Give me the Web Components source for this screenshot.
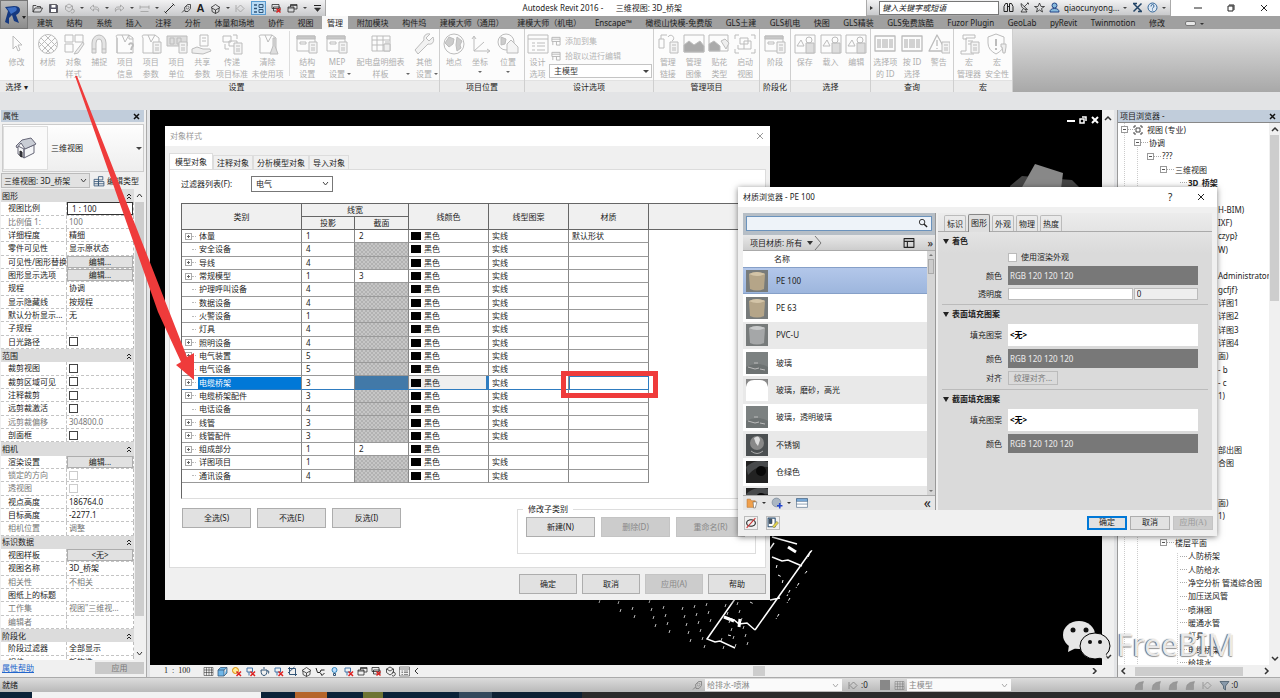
<!DOCTYPE html>
<html lang="zh-CN">
<head>
<meta charset="utf-8">
<title>Autodesk Revit 2016 - 三维视图: 3D_桥架</title>
<style>
html,body{margin:0;height:100%}
body{font:8px/12px "Noto Sans","Noto Sans CJK SC",sans-serif;color:#222;background:#e3e4e6;overflow:hidden}
</style>
</head>
<body>
<rv-app></rv-app>
<script>
const BASE = `*{box-sizing:border-box}
button,input,select{font:inherit;color:inherit;margin:0;padding:0;border:0;background:none;border-radius:0;min-width:0}
select{appearance:none}a{color:inherit;text-decoration:none}
input[type=checkbox]{appearance:none;width:9px;height:9px;border:1px solid #444;background:#fff;display:block}
input[type=checkbox]:disabled{border-color:#ccc}
span,a,button,label,td,th{white-space:nowrap}`;
const define = (name, css, html) => customElements.define(name, class extends HTMLElement {
  constructor(){
    super();
    const t = document.createElement('template');
    t.innerHTML = `<style>${BASE}${css}</style>${typeof html === 'function' ? html(this) : html}`;
    this.attachShadow({mode:'open'}).append(t.content.cloneNode(true));
  }
});

/* Icon shapes, all on a 22 by 22 grid. */
const card = (x,y) => `<path fill="#f4f4f4" d="M${x} ${y}h8v11h-8z"/><path d="M${x+2} ${y+3}h4M${x+2} ${y+6}h4M${x+2} ${y+8}h4"/>`;
const ICONS = {
  cursor:'<path d="M7 3v13l3-3 2 5 2-1-2-5h4z"/>',
  material:'<circle cx="11" cy="11" r="9.500"/><path d="M4 5l13 13M8 2l12 12M2 9l11 11M18 5L5 18M14 2L2 14M20 9L9 20"/>',
  objstyle:'<path d="M2 2h8v7H2zM12 2h8v7h-8zM2 11h8v8H2z"/><path d="M20 9l-7 9-2 3 4-1 6-9z" fill="#eee"/>',
  magnet:'<path fill="#e4e4e4" d="M4 20V10a7 8 0 0 1 14 0v10h-4V10a3 4 0 0 0-6 0v10zM4 16h4M14 16h4"/>',
  projinfo:'<path d="M3 5q-2-3 1-3h11l4 3v15H3zM3 5v15M8 2l3 7 4-7M15 2v4h4"/><path d="M15 12a2 2 0 1 1 3 2l-1 3M17 19v1" stroke-width="2"/>',
  projparam:'<path d="M3 5q-2-3 1-3h11l4 3v15H3zM8 2l3 7 4-7"/>'+card(13,9),
  units:'<path fill="#ddd" d="M1 3h20v10H1z"/><path d="M4 5h4v6H4zM11 5h4v6h-4z"/>'+card(13,9),
  shared:'<path d="M9 2h8v11H9zM11 5h4M11 8h4"/><path d="M1 16l5-2 6 2h7l1 2-8 3-11-1z" fill="#eee"/>',
  transfer:'<path d="M2 3h8v6H2zM8 8h8v5H8zM12 2h4v4M4 11v5h4"/>'+card(13,10),
  purge:'<path d="M3 5q-2-3 1-3h11l4 3v15H3zM8 2l3 7 4-7"/><path d="M16 5h2v8l3 8h-8l3-8z" fill="#ddd"/>',
  panel:'<path d="M1 3h18v15H1zM4 9h6v2H4z"/><path d="M1 3h18v3H1z" fill="#c8c8c8"/>'+card(13,9),
  schedule:'<path d="M2 3h18v15H2zM2 7h18M2 12h18M7 3v15M13 3v15"/><path fill="#eee" d="M14 11h6v7h-6zM16 8v3M18 8v3"/>',
  wrench:'<path fill="#f2f2f2" d="M20 4l-4 4-3-3 4-4c-4-1-7 2-6 6l-9 10 3 4 10-10c4 1 7-2 5-7z"/>',
  globe:'<circle cx="11" cy="11" r="10"/><path fill="#ccc" d="M6 4l5 2-1 5-4 3-4-4zM14 4l5 4-2 4 1 3-4 3-1-6z"/>',
  coord:'<path d="M5 4v14h15M5 18L15 9M3 6l2-3 2 3M18 16l3 2-3 2"/>',
  position:'<circle cx="9" cy="9" r="8"/><path fill="#ccc" d="M4 4l5 2-1 5-4 1z"/><path fill="#f4f4f4" d="M10 11l4-4 7 7v6H10z"/>',
  design:'<path d="M1 2h20v18H1zM1 6h20M5 10h3M10 10h8M5 13h3M10 13h8M5 17h3M10 17h8"/>',
  small:'<path stroke-width="2" d="M2 3h18v9H2zM2 7h18M4 12v8M12 12v8h8v-8"/>',
  link:'<path d="M2 6h5v9H2zM4 6V2h6M11 4a3 3 0 1 1 4 4"/>'+card(13,9),
  image:'<path d="M1 2h20v17H1z"/><path fill="#aaa" d="M1 19v-7l5-4 5 4 6-4 4 5v6z"/>',
  decal:'<path d="M1 2h19v16H1z"/><path fill="#aaa" d="M1 18v-7l5-3 6 5v5z"/><path fill="#eee" d="M13 8l4-2 4 4-3 6z"/>',
  start:'<path d="M1 6V2h4M17 2h4v4M21 16v4h-4M5 20H1v-4M6 5h8v6H6zM10 8h7v8h-7zM4 12v4h6"/>',
  save:'<path d="M1 2h20v18H1zM3 13l4-6 3 6z"/><path fill="#ddd" d="M12 10h8v10h-8z"/><circle cx="15" cy="7" r="3"/>',
  barcode:'<path d="M1 3h20v15H1zM4 6v9M6 6v9M9 6v9M11 6v9M13 6v9M16 6v9M18 6v9" stroke-width="1.300"/>',
  warn:'<path stroke-width="1.300" d="M1 18L9 2l9 16zM9 7v6M9 15v1"/>'+card(14,9),
  macro:'<path d="M5 2h12v3H8v13H3v3h13M5 2v4h4M10 8h5M10 11h4"/>'+card(13,9),
  shield:'<path d="M10 1l8 3v6q0 7-8 11-8-4-8-11V4z"/><path d="M10 6v7M10 15v2" stroke-width="2"/><path fill="#eee" d="M15 11h5v3l-1 6h-2l-1-6h-1z"/>',
  open:'<path stroke-width="1.500" d="M2 18V5h6l2 2h7v3M2 18l4-8h15l-4 8z"/>',
  disk:'<path fill="#556" d="M3 3h14l2 2v14H3z"/><path fill="#fff" stroke="none" d="M7 4h8v5H7zM6 12h10v6H6z"/>',
  sync:'<path stroke-width="1.500" d="M3 6l7-4 7 4v7l-7 5-7-5zM3 6l7 4 7-4M14 13a4 4 0 1 1 0 6"/>',
  undo:'<path stroke-width="1.500" d="M9 4l-7 6 7 6v-4h5q4 0 5 5 2-9-5-9H9z"/>',
  redo:'<path stroke-width="1.500" d="M13 4l7 6-7 6v-4H8q-4 0-5 5-2-9 5-9h5z"/>',
  dim:'<path d="M2 5v7M20 5v7M2 8h18M3 17h16" stroke-width="1.500"/>',
  line:'<path d="M3 19L19 3M1 17l4 4M17 1l4 4" stroke-width="2"/>',
  tag:'<path stroke-width="1.500" d="M2 19l5-5M7 9l6-6h6v8l-5 6h-6z"/><circle cx="13" cy="9" r="3"/>',
  home:'<path d="M2 9l9-6 9 6-9 5zM4 10v7l7 4 7-4v-7M11 14v7" stroke-width="1.500"/>',
  section:'<path stroke-width="1.500" d="M4 11l7-7 7 7-7 7zM2 4v14"/>',
  thin:'<path stroke="#357" stroke-width="3" d="M2 4h6M2 11h6M2 18h6"/><path stroke="#357" stroke-width="2" d="M12 3h8v6h-8zM12 13h8v6h-8z"/>',
  close:'<path stroke-width="1.500" d="M2 3h14v8H2zM5 8h13v8H5z"/><path stroke="#d22" stroke-width="3" d="M11 11l8 8M19 11l-8 8"/>',
  windows:'<path d="M2 8h12v10H2zM7 8V3h13v9h-6M2 10h12M7 5h13" stroke-width="1.500"/>',
  menu:'<path d="M4 5h14" stroke-width="2"/><path fill="#333" d="M5 10h12l-6 7z"/>',
  bino:'<path stroke-width="2" d="M2 19V9l3-6h4v16zM13 19V3h4l3 6v10zM9 9h4"/>',
  dish:'<path stroke-width="1.500" d="M4 3q0 12 13 12L4 3M10 10l8-8M8 14l-4 6h12l-4-6M16 2h3v3"/>',
  star:'<path stroke-width="1.500" d="M11 2l3 7h7l-6 4 2 7-6-4-6 4 2-7-6-4h7z"/>',
  user:'<circle cx="11" cy="7" r="5" fill="#8bd" stroke="#248" stroke-width="2"/><path fill="#8bd" stroke="#248" stroke-width="2" d="M2 20q0-7 9-7t9 7z"/>',
  exch:'<path stroke="#246" stroke-width="3" d="M3 3l16 16M19 3L3 19M2 3h8M12 19h8"/>',
  help:'<circle cx="11" cy="11" r="9" stroke="#369" fill="#dde8f4" stroke-width="2"/><path stroke="#369" stroke-width="2" d="M8 9q0-4 3-4t3 3-3 4v1M11 15v2"/>',
  cube:'<path fill="#6fb6e8" stroke="#357" stroke-width="1.500" d="M2 8h12v12H2zM2 8l5-5h13l-6 5M20 3v11l-6 6"/>',
  grid:'<path d="M2 3h18v16H2zM2 8h18M2 13h18M7 3v16M12 3v16M17 3v16"/>',
  sun:'<circle cx="9" cy="9" r="6" stroke="#d80" stroke-width="2" fill="#fe9"/><path stroke="#d22" stroke-width="3" d="M11 11l9 9M20 11l-9 9"/>',
  bulbx:'<path stroke="#47a" stroke-width="2" d="M4 4h11v8H4zM8 12v7"/><path stroke="#d22" stroke-width="3" d="M11 11l9 9M20 11l-9 9"/>',
  tea:'<path stroke="#357" stroke-width="2" d="M4 8h12q0 11-6 11T4 8zM16 10q5-2 3 5M8 4h4"/>',
  crop:'<path stroke="#357" stroke-width="2" d="M5 2v15h15M2 5h15v15M2 14L15 2"/>',
  bulb:'<circle cx="11" cy="8" r="5" stroke="#38b" fill="#bdf" stroke-width="2"/><path stroke="#357" stroke-width="2" d="M9 15h4v4H9z"/>',
  glasses:'<path stroke-width="2" d="M2 4l3 9h5l2-5h7M11 14l3 5 5-5"/>',
  filter:'<path fill="#89a" stroke="#456" stroke-width="1.500" d="M2 3h18l-7 9v8l-4-3v-5z"/>',
  flag:'<path fill="#999" d="M2 19l2-9 6-5 9-2-2 6v10z"/>',
  folder:'<path fill="#f0a04c" stroke="#b76a20" d="M2 19V4h6l2 3h7v12z"/><path fill="#fff" stroke="#555" d="M13 9h7l-3 11h-3z"/>',
  ball:'<circle cx="10" cy="10" r="8" fill="#aab6c2" stroke="#678"/><path stroke="#24c" stroke-width="3" d="M16 11v10M11 16h10"/>',
  list:'<path fill="#fff" stroke="#357" d="M1 3h20v16H1z"/><path fill="#7fb0de" stroke="#357" d="M1 3h20v5H1zM1 13h20"/>',
  pane:'<path stroke-width="2" d="M2 3h18v16H2zM2 8h18M8 8v11"/>',
  search:'<circle cx="9" cy="9" r="6" stroke-width="2"/><path stroke-width="3" d="M13 13l7 7"/>',
  noedit:'<ellipse cx="11" cy="11" rx="8" ry="6" stroke-width="2"/><path stroke="#c33" stroke-width="2" d="M3 20L19 2"/>',
  edit:'<path fill="#fff" stroke="#357" stroke-width="2" d="M2 2h13v16H2z"/><path fill="#357" d="M4 4h5v8H4z"/><path fill="#e5d44a" stroke="#775" d="M10 17l8-9 3 3-8 9z"/>',
  house:'<path fill="#f4f5f7" stroke="#667" d="M3 9l6 3v9l-6-4zM9 12l10-4v8L9 21z"/><path fill="#c9cdd5" stroke="#667" d="M1 9l6-6 9-2 5 6-11 5-4-6-4 5z"/><path fill="#445" d="M5 14l2 1v5l-2-1z"/>',
  type:'<path stroke="#357" stroke-width="1.500" d="M2 8h8v12H2zM2 12h8M10 3h8v6h-8zM10 12h10v8H10zM2 16h18"/>'
};
customElements.define('rv-icon', class extends HTMLElement {
  constructor(){
    super();
    this.attachShadow({mode:'open'}).innerHTML = `<style>:host{display:inline-flex;width:var(--icon,22px);height:var(--icon,22px);flex:none}svg{width:100%;height:100%}</style>
    <svg viewBox="0 0 22 22" fill="none" stroke="var(--ink,currentColor)" stroke-linejoin="round" aria-hidden="true">${ICONS[this.getAttribute('name')]||''}</svg>`;
  }
});
const ic = n => `<rv-icon name="${n}"></rv-icon>`;

/* Title bar */
define('rv-title', `:host{display:flex;height:16px;background:#fff}
.bar{display:flex;align-items:center;background:linear-gradient(#f2f2f3,#c9cacc);--icon:11px}
.qat{width:298px;justify-content:space-between;padding:0 2px 0 4px;border-right:1px solid #aaa}
.qat button,.info button{display:flex;align-items:center;height:14px}
.qat .on{background:#b9dbf5;border:1px solid #5a9bd0;padding:0 1px}
.dim{color:#999}.a{font:bold 11px/12px "Liberation Sans",sans-serif}
i{border:2px solid transparent;border-top-color:#444;border-bottom:0}
h1{flex:1;margin:0;font:inherit;line-height:16px;text-align:right;white-space:pre;padding-right:184px}
.info{width:305px;border:1px solid #aaa;border-width:0 1px 1px;justify-content:space-between;padding-right:4px}
.info input{width:120px;height:14px;border:1px solid #777;background:#fff;font-style:italic;padding:0 2px}
.win{display:flex;width:109px;justify-content:space-around;align-items:center;padding-left:10px}
.win svg{width:8px;height:8px;display:block}
`, `<div class="bar qat"><button aria-label="打开">${ic('open')}</button><button aria-label="保存">${ic('disk')}</button><button class="dim" aria-label="同步">${ic('sync')}</button><i></i><button class="dim" aria-label="放弃">${ic('undo')}</button><i></i><button class="dim" aria-label="重做">${ic('redo')}</button><i></i><button class="dim" aria-label="测量">${ic('dim')}</button><i></i><button aria-label="对齐标注">${ic('line')}</button><button aria-label="标记">${ic('tag')}</button><button class="a">A</button><button aria-label="默认三维视图">${ic('home')}</button><i></i><button class="dim" aria-label="剖面">${ic('section')}</button><button class="on" aria-label="细线">${ic('thin')}</button><button aria-label="关闭隐藏窗口">${ic('close')}</button><button aria-label="切换窗口">${ic('windows')}</button><i></i><button aria-label="自定义">${ic('menu')}</button></div>
<h1>Autodesk Revit 2016 -      三维视图: 3D_桥架</h1>
<div class="bar info"><button aria-label="展开"><svg width="8" height="8"><path d="M3 2l3 2-3 2z" fill="#333"/></svg></button><input aria-label="搜索" value="键入关键字或短语"><button aria-label="查找">${ic('bino')}</button><button aria-label="通讯中心">${ic('dish')}</button><button aria-label="收藏夹">${ic('star')}</button><button aria-label="登录">${ic('user')}</button><span>qiaocunyong...</span><i></i><button aria-label="Exchange">${ic('exch')}</button><button aria-label="帮助">${ic('help')}</button><i></i></div>
<div class="win"><button aria-label="最小化"><svg viewBox="0 0 8 8"><path d="M0 4h8" stroke="#222"/></svg></button><button aria-label="还原"><svg viewBox="0 0 8 8" fill="none" stroke="#222"><path d="M1 2h5v5h-5zM2 1h5v5"/></svg></button><button aria-label="关闭"><svg viewBox="0 0 8 8"><path d="M1 1l6 6M7 1l-6 6" stroke="#222"/></svg></button></div>`);

const TABS = '建筑,结构,系统,插入,注释,分析,体量和场地,协作,视图,管理,附加模块,构件坞,建模大师（通用）,建模大师（机电）,Enscape™,橄榄山快模-免费版,GLS土建,GLS机电,快图,GLS精装,GLS免费族酷,Fuzor Plugin,GeoLab,pyRevit,Twinmotion,修改'.split(',');
define('rv-tabs', `:host{display:flex;height:13px;background:#a0a0a0}
nav{flex:1;display:flex;justify-content:space-between;padding-left:4px;color:#1c1c1c}
a{padding:0 5px;line-height:14px}a.on{background:#f8f8f8}
button{width:11px;height:5px;margin:5px 4px 0 15px;background:#e8e8e8;border:1px solid #777;border-radius:2px}
i{border:2px solid transparent;border-top-color:#333;border-bottom:0;height:0;margin:7px 76px 0 0}`,
`<nav>${TABS.map(t=>`<a href="#" ${t==='管理'?'class="on" aria-current="page"':''}>${t}</a>`).join('')}</nav><button aria-label="最小化面板"></button><i></i>`);

/* Ribbon */
define('rv-tool', `:host{display:block;flex:var(--w,26) 1 0;min-width:0}
button{width:100%;display:flex;flex-direction:column;align-items:center;padding-top:4px;gap:1px;line-height:11px;color:#aeaeae}
button span{display:block}i{border:2px solid transparent;border-top-color:#666;border-bottom:0;margin-top:3px}
.s{position:relative}.s i{position:absolute;right:0;bottom:4px}`,
  el => { const l=el.getAttribute('label').split('|'); if(el.hasAttribute('w')) el.style.setProperty('--w',el.getAttribute('w'));
    return `<button class="${el.hasAttribute('side')?'s':''}"><rv-icon name="${el.getAttribute('icon')}" style="--ink:#bcbcbc"></rv-icon>${l.map(t=>`<span>${t}</span>`).join('')}${el.hasAttribute('side')||el.hasAttribute('drop')?'<i></i>':''}</button>`; });
define('rv-group', `:host{display:flex;flex-direction:column;border-right:1px solid #cfcfcf;background:#fcfcfc}
.body{flex:1;display:flex;min-height:0;padding:0 1px}
.name{height:12px;line-height:12px;background:#ececec;text-align:center;border-top:1px solid #e2e2e2}`,
  el => `<div class="body"><slot></slot></div><div class="name">${el.getAttribute('name')}</div>`);
const tool = (icon,label,w=26,x='') => `<rv-tool icon="${icon}" label="${label}" w="${w}" ${x}></rv-tool>`;
define('rv-ribbon', `:host{display:flex;height:63px;background:linear-gradient(#dedede,#a8a8a8)}
.opt{width:103px;display:flex;flex-direction:column;padding:4px 0 2px;color:#b4b4b4;--icon:10px}
.opt button{display:flex;gap:4px;align-items:center;height:15px;padding-left:2px}
.opt label{position:relative;display:block;height:14px;margin-top:1px;color:#333}
.opt select{width:100%;height:14px;border:1px solid #c4c4c4;background:#fff;padding:0 4px}
.opt label::after{content:"";position:absolute;right:3px;top:6px;border:3px solid transparent;border-top-color:#444;border-bottom:0}
.rule{width:1px;background:#ddd;margin:2px 1px 4px 3px}`,
`<rv-group name="选择 ▾" style="width:34px">${tool('cursor','修改')}</rv-group>
<rv-group name="设置" style="width:406px">${tool('material','材质')}${tool('objstyle','对象|样式')}${tool('magnet','捕捉')}${tool('projinfo','项目|信息')}${tool('projparam','项目|参数')}${tool('units','项目|单位')}${tool('shared','共享|参数')}${tool('transfer','传递|项目标准',34)}${tool('purge','清除|未使用项',38)}<div class="rule"></div>${tool('panel','结构|设置',32)}${tool('panel','MEP|设置',28,'side')}${tool('schedule','配电盘明细表|样板',60,'side')}${tool('wrench','其他|设置',28,'side')}</rv-group>
<rv-group name="项目位置" style="width:85px">${tool('globe','地点')}${tool('coord','坐标',26,'drop')}${tool('position','位置',30,'drop')}</rv-group>
<rv-group name="设计选项" style="width:129px">${tool('design','设计|选项')}<div class="opt"><button>${ic('small')}<span>添加到集</span></button><button>${ic('small')}<span>拾取以进行编辑</span></button><label><select aria-label="设计选项"><option>主模型</option></select></label></div></rv-group>
<rv-group name="管理项目" style="width:106px">${tool('link','管理|链接')}${tool('image','管理|图像')}${tool('decal','贴花|类型')}${tool('start','启动|视图')}</rv-group>
<rv-group name="阶段化" style="width:31px">${tool('panel','阶段')}</rv-group>
<rv-group name="选择" style="width:80px">${tool('save','保存')}${tool('save','载入')}${tool('save','编辑')}</rv-group>
<rv-group name="查询" style="width:83px">${tool('barcode','选择项|的 ID')}${tool('barcode','按 ID|选择')}${tool('warn','警告')}</rv-group>
<rv-group name="宏" style="width:59px">${tool('macro','宏|管理器')}${tool('shield','宏|安全性')}</rv-group>`);

/* Properties palette: [label, kind, value, disabled] */
const PROPS = [['图形','h'],['视图比例','box','1 : 100'],['比例值 1:','t','100',1],['详细程度','t','精细'],['零件可见性','t','显示原状态'],['可见性/图形替换','b','编辑...'],['图形显示选项','b','编辑...'],['规程','t','协调'],['显示隐藏线','t','按规程'],['默认分析显示...','t','无'],['子规程','t',''],['日光路径','c'],['范围','h'],['裁剪视图','c'],['裁剪区域可见','c'],['注释裁剪','c'],['远剪裁激活','c'],['远剪裁偏移','t','304800.0',1],['剖面框','c'],['相机','h'],['渲染设置','b','编辑...'],['锁定的方向','c','',1],['透视图','c','',1],['视点高度','t','186764.0'],['目标高度','t','-2277.1'],['相机位置','t','调整',1],['标识数据','h'],['视图样板','b','&lt;无&gt;'],['视图名称','t','3D_桥架'],['相关性','t','不相关',1],['图纸上的标题','t',''],['工作集','t','视图"三维视...',1],['编辑者','t','',1],['阶段化','h'],['阶段过滤器','t','全部显示'],['相位','t','新构造']];
const propRow = ([l,k,v='',d],i) => k==='h' ? `<div class="h"><span>${l}</span><svg viewBox="0 0 6 8"><path d="M1 4l2-2 2 2M1 7l2-2 2 2" fill="none" stroke="#222"/></svg></div>`
  : `<div class="r ${d?'d':''}"><label for="p${i}">${l}</label><div class="v">${k==='b'?`<button id="p${i}">${v}</button>`:k==='c'?`<input type="checkbox" id="p${i}" ${d?'disabled':''}>`:`<input class="${k}" id="p${i}" value='${v}'>`}</div></div>`;
define('rv-properties', `:host{display:flex;flex-direction:column;background:#f0f0f0;border-right:1px solid #aaa;padding:0 2px 1px 1px}
header{display:flex;justify-content:space-between;align-items:center;height:12px;background:#c1cddb;padding:0 4px 0 2px;flex:none}
header svg{width:7px;height:7px}
.type{display:flex;align-items:center;height:48px;margin:2px 0 0 1px;border:1px solid #ccc;background:linear-gradient(#fefefe,#eee);flex:none;gap:3px}
.type div{width:45px;height:44px;border:1px solid #ddd;display:grid;place-items:center;background:#fafafa}
.type span{flex:1}.type i{border:3px solid transparent;border-top-color:#444;border-bottom:0;margin-right:1px}
.pick{display:flex;height:17px;flex:none;--icon:12px;padding:1px 0}
.pick label{position:relative;width:89px}.pick select{width:100%;height:15px;background:#e2e2e2;border:1px solid #bbb;padding-left:2px}
.pick svg{position:absolute;right:3px;top:5px;width:7px;height:5px}
.pick button{display:flex;align-items:center;gap:2px;padding-left:3px}
.mid{flex:1;display:flex;min-height:0;overflow:hidden}
.list{flex:1;height:480px;display:grid;grid-template-rows:repeat(36,1fr);background:#fff}
.h{display:flex;align-items:center;justify-content:space-between;background:#dcdcdc;padding:0 2px 0 1px}.h svg{width:6px;height:8px}
.r{display:flex;border-bottom:1px dashed #c4c4c4;border-right:1px dashed #bbb;min-height:0;line-height:12px}.r label{width:66px;padding-left:7px;overflow:hidden;border-right:1px dashed #c4c4c4}
.v{flex:1;display:flex;align-items:center;min-width:0}.v input:not([type=checkbox]){width:100%;padding-left:2px;height:11px}.v .box{border:1px solid #333;height:13px!important;padding-left:4px!important}
.v button{width:100%;height:12px;line-height:10px;background:#e1e1e1;border:1px solid #adadad}.v [type=checkbox]{margin-left:2px}
.d,.d input{color:#777}
.sb{width:9px;background:#f0f0f0;display:flex;flex-direction:column;margin-left:1px;align-items:center;padding:4px 0}
.sb svg{width:7px;height:5px;flex:none}.sb div{width:9px;background:#cdcdcd;flex:1;margin:4px 0 35px}
footer{display:flex;justify-content:space-between;height:16px;padding:2px 0 2px 1px;flex:none}footer a{color:#2266cc;text-decoration:underline}
footer button{width:49px;height:12px;line-height:12px;background:#c9c9c9;color:#777}`,
`<header><span>属性</span><svg viewBox="0 0 7 7"><path d="M1 1l5 5M6 1L1 6" stroke="#111" stroke-width="1.500"/></svg></header>
<div class="type"><div>${ic('house')}</div><span>三维视图</span><i></i></div>
<div class="pick"><label><select aria-label="实例"><option>三维视图: 3D_桥架</option></select><svg viewBox="0 0 7 5"><path d="M1 1l2.500 3L6 1" fill="none" stroke="#444"/></svg></label><button>${ic('type')}编辑类型</button></div>
<div class="mid"><div class="list">${PROPS.map(propRow).join('')}</div><div class="sb"><svg viewBox="0 0 7 5"><path d="M1 4l2.500-3L6 4" fill="none" stroke="#333"/></svg><div></div><svg viewBox="0 0 7 5"><path d="M1 1l2.500 3L6 1" fill="none" stroke="#333"/></svg></div></div>
<footer><a href="#">属性帮助</a><button disabled>应用</button></footer>`);

/* Drawing area with its view control bar */
const specks = Array.from({length:60},(_,i)=>{const x=450+(i*37)%150,y=490+(i*23)%50;return (y-490)<(x-440)*.4?`M${x} ${y}l-1 3`:''}).join('');
define('rv-canvas', `:host{display:grid;grid-template:minmax(0,1fr) 12px/minmax(0,1fr) 12px;min-width:0;background:#f0f0f0}
.view{background:#000;position:relative;overflow:hidden}.view>svg{position:absolute;left:0;top:0}
.win{position:absolute;right:3px;top:6px;display:flex;gap:4px}.win svg{width:8px;height:8px}
.vs{display:flex;flex-direction:column;justify-content:space-between;align-items:center;padding:5px 0}
.vs svg,.bar>svg{width:8px;height:6px}
.bar{grid-column:1/-1;display:flex;align-items:center;padding:0 16px 0 14px;--icon:11px;gap:3px}
.bar span{font:8px/12px "Liberation Serif","Noto Serif",serif;width:36px;white-space:pre}
.bar div{flex:1}.bar i{width:12px;height:10px;background:#cdcdcd;display:block;margin-left:329px}`,
`<div class="view"><svg width="950" height="555" fill="none" stroke="#fff">
<g stroke="none"><path fill="#444" d="M860 76l12-10 50 4 10 10v10h-70z"/><path fill="#888" d="M885 54l28 9-2 16h-40z"/><path fill="#777" d="M868 78h46v6h-50z"/></g>
<path d="M661 441L605 520M624 433L557 529l8 3 5-1 15 7M574 507l10 3 5 4 8-1 8 7M622 447l10 4 6-1 14 6M622 427l25 7M620 490l10-2" stroke-width="1.500"/>
<path d="M574 507l10 4M590 509l-1 8M638 437l8 5" stroke-width="3"/><path d="M662 440l-5 9m0 12l-3 4m-5 8l-3 5m-6 10l-3 5m-8 11l-3 5M627 455l-1 4M633 470l-1 4M640 480l-3 6M628 465l4 2M600 492l4 2M578 525l4 1" stroke-dasharray="3 2"/>
<path d="${specks}" stroke="#bbb"/></svg>
<div class="win"><svg viewBox="0 0 8 8"><path d="M0 5h8" stroke="#fff" stroke-width="2"/></svg><svg viewBox="0 0 8 8"><path d="M1 3h4v4H1zM3 1h4v4" fill="none" stroke="#fff" stroke-width="1.500"/></svg><svg viewBox="0 0 8 8"><path d="M1 1l6 6M7 1L1 7" stroke="#fff" stroke-width="2"/></svg></div></div>
<div class="vs"><svg viewBox="0 0 8 6"><path d="M1 5l3-3 3 3" fill="none" stroke="#333" stroke-width="1.500"/></svg><svg viewBox="0 0 8 6"><path d="M1 1l3 3 3-3" fill="none" stroke="#333" stroke-width="1.500"/></svg></div>
<div class="bar"><span>1  :  100</span>${['grid','cube','sun','bulbx','tea','bulbx','crop','home','glasses','bulb','bulbx','windows','close','sync','design'].map(ic).join('')}<svg viewBox="0 0 8 6"><path d="M5 0L2 3l3 3" fill="none" stroke="#333"/></svg><i></i><div></div><svg viewBox="0 0 8 6"><path d="M3 0l3 3-3 3" fill="none" stroke="#333" stroke-width="1.500"/></svg></div>`);

/* Project browser: row index -> [level, text, opener] */
const TREE = {0:[0,'视图 (专业)',1],1:[1,'协调',1],2:[2,'???',1],3:[3,'三维视图',1],4:[4,'<b>3D_桥架</b>'],6:[6,'H-BIM)'],7:[6,'IXF)'],8:[6,'czyp}'],9:[6,'W)'],11:[6,'Administrator'],12:[6,'gcfjf}'],13:[6,'详图1'],14:[6,'详图2'],15:[6,'详图3'],16:[6,'详图4'],17:[6,'面)'],18:[6,'- b'],19:[6,'- c'],20:[6,'1)'],24:[6,'部出图'],25:[6,'合图'],28:[6,'面)'],29:[6,'1)'],31:[3,'楼层平面',1],32:[4,'人防桥架'],33:[4,'人防给水'],34:[4,'净空分析 管道综合图'],35:[4,'加压送风管'],36:[4,'喷淋图'],37:[4,'暖通水管'],38:[4,'灯具'],39:[4,'电缆桥架'],40:[4,'给排水']};
define('rv-browser', `:host{display:flex;flex-direction:column;background:#fff;border-left:1px solid #999}
header{display:flex;justify-content:space-between;align-items:center;height:13px;background:#c1cddb;padding:0 4px 0 2px;border-bottom:1px solid #888;flex:none}header svg{width:7px;height:7px}
.mid{flex:1;display:flex;min-height:0;overflow:hidden}
ul{flex:1;min-width:0;overflow:hidden;margin:0;padding:0;list-style:none;height:560px;display:grid;grid-template-rows:repeat(42,1fr);
background:repeating-linear-gradient(#ccc 0 1px,transparent 1px 2px) 6px 0/1px 100% no-repeat,repeating-linear-gradient(#ccc 0 1px,transparent 1px 2px) 19px 20px/1px 100% no-repeat,repeating-linear-gradient(#ccc 0 1px,transparent 1px 2px) 59px 430px/1px 100% no-repeat}
li{display:flex;align-items:center;min-height:0;padding-left:calc(3px + var(--l)*13px)}
li i{width:7px;height:7px;border:1px solid #999;background:linear-gradient(#555,#555) 1px 2px/3px 1px no-repeat #fff;flex:none}
li em{width:7px;flex:none}li u{width:7px;border-top:1px dotted #aaa;margin-right:1px;flex:none}
li.deep{padding-left:100px}li svg{width:10px;height:10px;margin:0 4px 0 -3px;flex:none}
.sb{width:11px;background:#f0f0f0;display:flex;flex-direction:column;align-items:center;padding:3px 0;justify-content:space-between}
.sb svg{width:8px;height:6px}.sb div{width:9px;height:166px;background:#cdcdcd;margin:3px 0 auto}
footer{display:flex;align-items:center;height:12px;background:#f0f0f0;padding:0 10px 0 2px;justify-content:space-between;flex:none}footer div{width:108px;height:9px;background:#cdcdcd;margin-right:12px}footer svg{width:6px;height:8px}`,
`<header><span>项目浏览器 -</span><svg viewBox="0 0 7 7"><path d="M1 1l5 5M6 1L1 6" stroke="#111" stroke-width="1.500"/></svg></header>
<div class="mid"><ul>${Array.from({length:42},(_,i)=>{const r=TREE[i];if(!r)return '<li></li>';if(r[0]===6)return `<li class="deep"><span>${r[1]}</span></li>`;
return `<li style="--l:${r[0]}">${r[2]?'<i></i>':'<em></em>'}<u></u>${i===0?'<svg viewBox="0 0 10 10" fill="none" stroke="#444"><path d="M1 3V1h2M7 1h2v2M9 7v2H7M3 9H1V7M3 3h4v4H3z"/></svg>':''}<span>${r[1]}</span></li>`}).join('')}</ul>
<div class="sb"><svg viewBox="0 0 8 6"><path d="M1 5l3-3 3 3" fill="none" stroke="#333" stroke-width="1.500"/></svg><div></div><svg viewBox="0 0 8 6"><path d="M1 1l3 3 3-3" fill="none" stroke="#333" stroke-width="1.500"/></svg></div></div>
<footer><svg viewBox="0 0 6 8"><path d="M5 1L2 4l3 3" fill="none" stroke="#333" stroke-width="1.500"/></svg><div></div><svg viewBox="0 0 6 8"><path d="M1 1l3 3-3 3" fill="none" stroke="#333" stroke-width="1.500"/></svg></footer>`);

define('rv-status', `:host{display:flex;align-items:center;height:15px;background:linear-gradient(#dcdcdc,#b9b9b9);--icon:11px;padding:0 42px 0 2px;color:#777;gap:2px;border-top:1px solid #aaa}
span:first-of-type{width:688px;color:#222}label{position:relative;display:block;height:12px}select{width:100%;height:12px;background:#fafafa;color:#888;padding-left:2px}.a{width:137px}.b{width:104px}
label svg{position:absolute;right:3px;top:4px;width:7px;height:5px}
div{flex:1}.sq{width:10px;height:10px;background:#888;margin:0 2px 0 10px}nav{display:flex;gap:6px;align-items:center;color:#888}nav b{font-weight:400;color:#222;margin-left:-5px}.n{color:#222}`,
`<span>就绪</span>${ic('tag')}<label class="a"><select aria-label="工作集"><option>给排水-喷淋</option></select><svg viewBox="0 0 7 5"><path d="M1 1l2.500 3L6 1" fill="none" stroke="#aaa"/></svg></label><rv-icon name="section" style="margin-left:4px"></rv-icon><span class="n">:0</span><i class="sq"></i>${ic('grid')}<label class="b"><select aria-label="设计选项"><option>主模型</option></select><svg viewBox="0 0 7 5"><path d="M1 1l2.500 3L6 1" fill="none" stroke="#aaa"/></svg></label><div></div><nav>${['flag','flag','flag','flag','section','filter'].map(ic).join('')}<b>:0</b></nav>`);
define('rv-taskbar', `:host{display:flex;height:6px;background:#2b2b2b}i{display:block}`,
`<i style="width:32px;background:#0a2238"></i><i style="width:229px;background:#f2f2f2"></i><i style="width:34px;background:#0a2238"></i><i style="width:32px;background:#b5652a"></i><i style="width:36px;background:#0a2238"></i><i style="width:20px;background:#6e7433"></i><i style="width:76px;background:#0a2238"></i><i style="width:33px;background:#34495c"></i><i style="width:90px;background:#0d2033"></i>`);

/* Dialog frame */
define('rv-dialog', `:host{display:flex;flex-direction:column;background:#f0f0f0;box-shadow:0 1px 6px rgba(0,0,0,.5)}
header{display:flex;align-items:center;height:20px;background:#fff;padding:0 6px 0 5px;flex:none}:host([help]) header{padding-right:12px}header span{flex:1;color:var(--title,#222)}
header svg{width:8px;height:8px;color:var(--title,#222)}header b{font-weight:400;width:29px;font-size:10px}
.body{flex:1;display:flex;flex-direction:column;min-height:0}`,
 el => `<header><span>${el.getAttribute('heading')}</span>${el.hasAttribute('help')?'<b>?</b>':''}<svg viewBox="0 0 8 8"><path d="M1 1l6 6M7 1L1 7" stroke="currentColor"/></svg></header><div class="body"><slot></slot></div>`);

/* Object styles: [name, projection, cut, expandable, pattern] */
const ROWS = [['体量',1,2,1],['安全设备',4,0,0],['导线',4,0,1],['常规模型',1,3,1],['护理呼叫设备',4,0,0],['数据设备',4,0,0],['火警设备',1,0,0],['灯具',4,0,0],['照明设备',4,0,1],['电气装置',5,0,1],['电气设备',5,0,1],['电缆桥架',3,0,1],['电缆桥架配件',3,0,1],['电话设备',4,0,0],['线管',3,0,1],['线管配件',3,0,1],['组成部分',1,2,1,1],['详图项目',1,0,1],['通讯设备',4,0,0]];
define('rv-object-styles', `:host{display:block}
rv-dialog{height:100%;--title:#999}
.tabs{display:flex;padding:7px 0 0 4px;height:23px;align-items:flex-end}
.tabs a{padding:0 3px;height:14px;line-height:14px;border:1px solid #ddd;border-bottom:0}.tabs a.on{height:17px;line-height:15px;background:#fff;padding:0 5px;margin-bottom:-1px}
.page{flex:1;margin:0 4px;background:#fff;border:1px solid #dcdcdc;padding:5px 9px 13px 11px;display:flex;flex-direction:column}
.filter{display:flex;align-items:center;height:17px;position:relative}.filter label{width:70px}.filter select{width:82px;height:16px;border:1px solid #777;background:#fff;padding-left:4px}
.filter svg{width:7px;height:5px;margin-left:-11px}
.list{margin-top:11px;height:296px;border-left:1px solid #666;border-top:1px solid #666;border-bottom:1px solid #ddd;background:linear-gradient(#f0f0f0 25px,#666 25px,#666 26px,#fff 26px)}
table{border-collapse:separate;border-spacing:0;height:279px;width:467px;table-layout:fixed;line-height:10px}
tr{height:13px}th,td{padding:0;font-weight:400;border-right:1px solid #888;border-bottom:1px solid #999;overflow:hidden}th{background:#f0f0f0;border-color:#666}
td{padding-left:4px}td:first-child{padding-left:2px}td:nth-child(5),td:nth-child(6){padding-left:3px}
.cut{background:repeating-conic-gradient(#b2b2b2 0 25%,#c6c6c6 0 50%) 0 0/4px 4px}
.n{display:flex;align-items:center}.n i{width:7px;height:7px;border:1px solid #aaa;margin-left:1px;background:linear-gradient(#666,#666) 1px 2px/3px 1px no-repeat,linear-gradient(#666,#666) 2px 1px/1px 3px no-repeat}.n i.no{border-color:transparent;background:none}
.n u{width:4px;border-top:1px dotted #bbb;margin-right:2px}.n span{flex:1;padding-left:1px}
.sw{display:inline-block;width:10px;height:8px;background:#000;margin:0 3px 0 -2px;vertical-align:-1px}
.sel .n span{background:#0078d7;color:#fff;line-height:12px}.sel .cut{background:#4279a8}.sel td{border-bottom-color:#2f7cc0}.sel td:nth-child(4){background:#efefef;border-right:3px solid #2f7cc0}
.sel td:nth-child(6){border:1px solid #2f7cc0}
.low{display:flex;justify-content:space-between;align-items:flex-start;margin-top:4px}
.btns{display:flex;gap:6px}.low>.btns{padding:5px 0 0 1px}
button{width:69px;height:20px;background:#e1e1e1;border:1px solid #adadad}button:disabled{background:#ccc;color:#888;border-color:#c4c4c4}
fieldset{margin:0;border:1px solid #ddd;padding:2px 10px 9px 8px;min-width:0;height:51px}legend{padding:0 5px;margin-left:-3px}
.foot{display:flex;justify-content:flex-end;gap:5px;padding:6px 4px 6px;height:32px}.foot button{width:58px}`,
`<rv-dialog heading="对象样式"><nav class="tabs"><a class="on" href="#">模型对象</a><a href="#">注释对象</a><a href="#">分析模型对象</a><a href="#">导入对象</a></nav>
<div class="page"><div class="filter"><label for="f">过滤器列表(F):</label><select id="f"><option>电气</option></select><svg viewBox="0 0 7 5"><path d="M1 1l2.500 3L6 1" fill="none" stroke="#444"/></svg></div>
<div class="list"><table><colgroup><col style="width:120px"><col style="width:53px"><col style="width:54px"><col style="width:80px"><col style="width:80px"><col style="width:80px"></colgroup>
<thead><tr><th rowspan="2">类别</th><th colspan="2">线宽</th><th rowspan="2">线颜色</th><th rowspan="2">线型图案</th><th rowspan="2">材质</th></tr><tr><th>投影</th><th>截面</th></tr></thead>
<tbody>${ROWS.map(([n,p,c,e,x])=>`<tr class="${n==='电缆桥架'?'sel':''}"><td><div class="n"><i class="${e?'':'no'}"></i><u></u><span>${n}</span></div></td><td>${p}</td><td class="${c?'':'cut'}">${c||''}</td><td><i class="sw"></i>黑色</td><td>${x?'':'实线'}</td><td>${n==='体量'?'默认形状':''}</td></tr>`).join('')}</tbody></table></div>
<div class="low"><div class="btns"><button>全选(S)</button><button>不选(E)</button><button>反选(I)</button></div><fieldset><legend>修改子类别</legend><div class="btns"><button>新建(N)</button><button disabled>删除(D)</button><button disabled>重命名(R)</button></div></fieldset></div></div>
<div class="foot"><button>确定</button><button>取消</button><button disabled>应用(A)</button><button>帮助</button></div></rv-dialog>`);

/* Material browser */
const can = (a,b) => `<path fill="#777b7b" d="M0 0h22v22H0z"/><path fill="${a}" d="M3 4q8-4 16 0l-1 15q-7 3-14 0z"/><path fill="${b}" d="M3 4q8-4 16 0-8 4-16 0z"/>`;
const glass = '<path fill="#7c8181" d="M0 0h22v22H0z"/><path fill="#6d7272" d="M0 15q11-6 22 0v7H0z"/><path stroke="#bbb" fill="none" d="M2 15l7 2 4-1M8 11h4M14 17l5 1"/>';
const dark = '<path fill="#222" d="M0 0h22v22H0z"/><path fill="#484a4c" d="M0 6Q10-3 22 1v5q-12-2-20 8z"/><circle cx="15" cy="10" r="5" fill="#090909"/>';
const MATS = [['PE 100',can('#b5a588','#d3c4a7')],['PE 63',can('#b5a588','#d3c4a7')],['PVC-U',can('#a5a7a8','#c8cacb')],['玻璃',glass],['玻璃，磨砂，高光','<path fill="#888" d="M0 0h22v22H0z"/><path fill="#fff" d="M0 22V8Q1 1 8 1h6q7 0 8 7v14z"/>'],['玻璃，透明玻璃',glass],['不锈钢','<path fill="#4c5052" d="M0 0h22v22H0z"/><circle cx="11" cy="9" r="7" fill="#888"/><path fill="#ddd" d="M8 4q5-4 6 2l-2 6q-3-3-4-8z"/><path stroke="#aaa" fill="none" d="M5 17q6 5 12 0"/>'],['仓绿色',dark],['',dark]];
define('rv-materials', `:host{display:block}
rv-dialog{height:100%}
.cols{flex:1;display:flex;gap:2px;padding:6px 5px 0;min-height:0}
.left{width:193px;flex:none;display:flex;flex-direction:column;border-right:1px solid #999}
.search{height:22px;background:#b6bec6;padding:3px;position:relative;flex:none}.search input{width:100%;height:15px;border:1px solid #6b93bd;background:#eef3f9}.search rv-icon{position:absolute;right:7px;top:5px;--icon:10px}
.bar{display:flex;align-items:center;height:16px;background:linear-gradient(#e8e8e8,#cdcdcd);border-bottom:1px solid #aaa;padding:0 2px 0 7px;flex:none;--icon:12px}
.bar svg{width:16px;height:14px;margin-left:5px}.bar b{margin-left:12px;font-size:11px;font-weight:400;line-height:12px}.bar rv-icon{margin-left:auto}
.tbl{flex:1;display:flex;min-height:0;overflow:hidden}.names{flex:1;background:#fff}
.head{height:16px;line-height:16px;padding-left:31px}
.m{display:grid;grid-auto-rows:1fr;height:246px}.m div{display:flex;align-items:center;gap:8px;padding-left:3px}.m div:nth-child(odd){background:#e9e9e9}.m div:first-child{background:linear-gradient(#b3c7ea,#9db6dd);border:1px solid #86a0c8;border-width:1px 0}
.m svg{width:22px;height:22px;flex:none}
.sb{width:8px;background:#d5d5d5;display:flex;flex-direction:column;align-items:center;padding:3px 1px;justify-content:space-between}.sb i{border:2px solid transparent}.sb i:first-child{border-bottom-color:#777;border-top:0}.sb i:last-child{border-top-color:#777;border-bottom:0}.sb div{width:6px;height:15px;border:1px solid #aaa;background:#ccc;margin:3px 0 auto}
.tools{display:flex;align-items:center;gap:4px;height:15px;background:#e6e6e6;border-top:1px solid #aaa;padding:0 4px 0 3px;flex:none;--icon:12px}.tools i{border:2px solid transparent;border-top-color:#333;border-bottom:0;margin-right:1px}.tools b{margin-left:auto;font-size:14px;font-weight:400}
.right{flex:1;min-width:0;background:linear-gradient(#ececec,#dadada 40px);display:flex;flex-direction:column}
.tabs{display:flex;gap:2px;padding:2px 0 0 6px;height:19px;border-bottom:1px solid #aaa;flex:none;align-items:flex-end}.tabs a{height:16px;line-height:16px;width:22px;text-align:center;border:1px solid #bbb;border-bottom:0;border-radius:2px 2px 0 0}.tabs a.on{height:18px;border-color:#888;background:#dfdfdf;margin-bottom:-1px}
section{display:flex;flex-direction:column;gap:3px;margin:0 4px;border-bottom:1px solid #bbb;padding:2px 10px 4px 0}section:last-child{border:0}
h2{margin:0;font:bold 8px/14px "Noto Sans","Noto Sans CJK SC",sans-serif;display:flex;align-items:center;gap:3px}h2::before{content:"";border:3px solid transparent;border-top:5px solid #222;border-bottom:0;margin-left:1px}
.f{display:flex;align-items:center}.f>label:first-child{width:60px;text-align:right;margin-right:6px}
.rgb{flex:1;height:19px;background:#787878;color:#eee;padding-left:2px;text-align:left}.fill{flex:1;height:22px;background:#fff;text-align:left;padding-left:2px;color:#000;font-weight:700}
.f input[type=checkbox]{border-color:#bbb;margin:0 4px 0 66px}.f input.t{height:12px;background:#fff;border:1px solid #bbb;padding-left:2px}.align{width:50px;height:14px;line-height:12px;border:1px solid #bbb;color:#777}
.foot{display:flex;align-items:center;height:26px;padding:0 4px 0 6px;gap:8px;flex:none;--icon:12px}.foot .i{width:14px;height:14px;border:1px solid #bbb;display:grid;place-items:center}.foot .r{margin-left:auto;display:flex;gap:3px}.foot .r button{width:40px;height:14px;line-height:12px;border:1px solid #adadad;background:#e1e1e1;font-family:"Liberation Serif","Noto Sans CJK SC",serif}.foot .r .ok{border:1px solid #0078d7;box-shadow:inset 0 0 0 1px #0078d7}.foot .r :disabled{background:#ccc;color:#999;border-color:#c4c4c4}`,
`<rv-dialog heading="材质浏览器 - PE 100" help><div class="cols"><div class="left"><div class="search"><input aria-label="搜索材质">${ic('search')}</div>
<div class="bar"><span>项目材质: 所有</span><svg viewBox="0 0 16 14"><path d="M0 5h6l-3 4z" fill="#333"/><path d="M8 0l6 7-6 7" fill="none" stroke="#777"/></svg>${ic('pane')}<b>»</b></div>
<div class="tbl"><div class="names"><div class="head">名称</div><div class="m">${MATS.map(([n,s])=>`<div><svg viewBox="0 0 22 22">${s}</svg><span>${n}</span></div>`).join('')}</div></div><div class="sb"><i></i><div></div><i></i></div></div>
<div class="tools">${ic('folder')}<i></i>${ic('ball')}<i></i>${ic('list')}<b>«</b></div></div>
<div class="right"><nav class="tabs"><a href="#">标识</a><a href="#" class="on">图形</a><a href="#">外观</a><a href="#">物理</a><a href="#">热度</a></nav>
<section><h2>着色</h2><div class="f"><input type="checkbox" id="u"><label for="u">使用渲染外观</label></div><div class="f"><label for="c1">颜色</label><button class="rgb" id="c1">RGB 120 120 120</button></div><div class="f"><label for="tr">透明度</label><input id="tr" class="t" style="flex:2"><input aria-label="透明度值" class="t" value="0" style="flex:1;margin-left:1px;background:#eee"></div></section>
<section><h2>表面填充图案</h2><div class="f"><label for="p1">填充图案</label><button class="fill" id="p1">&lt;无&gt;</button></div><div class="f"><label for="c2">颜色</label><button class="rgb" id="c2">RGB 120 120 120</button></div><div class="f"><label for="al">对齐</label><button class="align" id="al">纹理对齐...</button></div></section>
<section><h2>截面填充图案</h2><div class="f"><label for="p2">填充图案</label><button class="fill" id="p2">&lt;无&gt;</button></div><div class="f"><label for="c3">颜色</label><button class="rgb" id="c3">RGB 120 120 120</button></div></section></div></div>
<div class="foot"><button class="i" aria-label="隐藏">${ic('noedit')}</button><button class="i" aria-label="编辑">${ic('edit')}</button><div class="r"><button class="ok">确定</button><button>取消</button><button disabled>应用(A)</button></div></div></rv-dialog>`);

/* Arrow, frame and channel mark drawn over the windows */
define('rv-notes', `:host{position:absolute;inset:0;pointer-events:none}svg{position:absolute;left:0;top:0}
.mark{position:absolute;left:1117px;top:625px;font:30px/40px "Noto Sans",sans-serif;color:rgba(255,255,255,.85);text-shadow:-1px 0 1px #666,0 1px 1px #999}`,
`<svg width="1280" height="698"><path fill="#ef3b3b" d="M75 76l2 0L187 357l7-4v27l-18-15 5-3-23-50z"/><path fill="none" stroke="#ef3b3b" stroke-width="5" d="M563.500 373.500h92v22h-92z"/>
<g><ellipse cx="1079" cy="635" rx="16" ry="14" fill="#e6e6e6"/><path d="M1069 645l-1 7 8-4z" fill="#e6e6e6"/><ellipse cx="1095" cy="646" rx="15" ry="13" fill="#e6e6e6" stroke="#000"/><path d="M1099 657l8 4-1-7z" fill="#e6e6e6"/><g fill="#111"><circle cx="1073" cy="630" r="2.500"/><circle cx="1086" cy="630" r="2.500"/><circle cx="1090" cy="642" r="2"/><circle cx="1100" cy="642" r="2"/></g></g></svg><span class="mark">FreeBIM</span>`);

define('rv-app', `:host{display:flex;flex-direction:column;height:100vh;position:relative}
.top,rv-ribbon,rv-status,rv-taskbar{flex:none}
.top{display:grid;grid-template-columns:28px minmax(0,1fr)}.logo{grid-row:span 2;background:linear-gradient(#bcbcbc,#8c8c8c);border:1px solid #777;display:flex;align-items:center;justify-content:center}
.logo svg{width:24px;height:22px}
main{flex:1;display:grid;grid-template:minmax(0,1fr)/147px minmax(0,1fr) 163px;gap:3px;margin-top:18px;min-height:0}
main>*{min-height:0}
rv-object-styles{position:absolute;left:165px;top:126px;width:605px;height:474px}
rv-materials{position:absolute;left:738px;top:187px;width:479px;height:349px}`,
`<div class="top"><button class="logo" aria-label="应用程序菜单"><svg viewBox="0 0 24 22"><path fill="#16397f" d="M3 3l9-1q6 0 6 4 0 3-4 5l3 8-5-2-2-6-3 3v6l-4-2 3-11z"/><path fill="#3d6fc4" d="M5 4l8-1q3 1 1 4l-5 3z"/><path fill="#222" d="M20 12h4l-2 3z"/></svg></button><rv-title></rv-title><rv-tabs></rv-tabs></div>
<rv-ribbon></rv-ribbon>
<main><rv-properties></rv-properties><rv-canvas></rv-canvas><rv-browser></rv-browser></main>
<rv-status></rv-status><rv-taskbar></rv-taskbar>
<rv-object-styles></rv-object-styles><rv-materials></rv-materials><rv-notes></rv-notes>`);
</script>
</body>
</html>
